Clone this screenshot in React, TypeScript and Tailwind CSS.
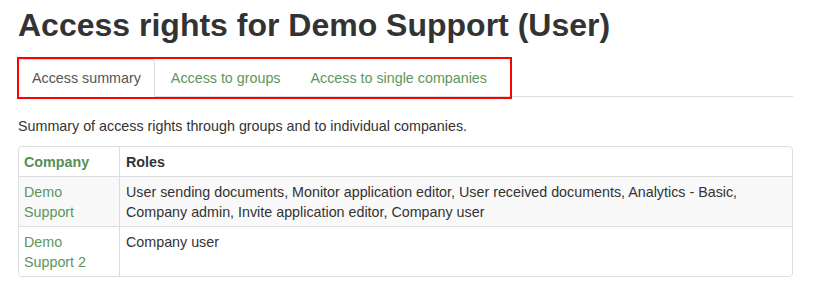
import React from 'react'

const tabs = ['Access summary', 'Access to groups', 'Access to single companies']

const rows = [
  {
    company: 'Demo Support',
    roles:
      'User sending documents, Monitor application editor, User received documents, Analytics - Basic, Company admin, Invite application editor, Company user',
    striped: true,
  },
  { company: 'Demo Support 2', roles: 'Company user', striped: false },
]

export default function App() {
  return (
    <div className="min-h-[295px] bg-white font-['Liberation_Sans',Arial,sans-serif] text-[14.3px] leading-5 text-[#333]">
      <div className="ml-[18px] w-[775px]">
        <h1 className="pt-[8px] text-[32px] leading-[35.2px] font-bold text-[#333]">
          Access rights for Demo Support (User)
        </h1>

        <div className="relative mt-[16px]">
          <ul className="flex border-b border-[#ddd]">
            {tabs.map((t, i) => (
              <li key={t} className="-mb-px mr-[2px]">
                {i === 0 ? (
                  <span className="block rounded-t-[4px] border border-[#ddd] border-b-transparent bg-white px-[13px] py-2 text-[#555]">
                    {t}
                  </span>
                ) : (
                  <a className="block border border-transparent px-[13px] py-2 text-[#5c965c]">{t}</a>
                )}
              </li>
            ))}
          </ul>
          <div className="pointer-events-none absolute -top-[2px] -left-[1px] h-[42px] w-[495px] border-2 border-[#ff0000]" />
        </div>

        <p className="mt-[19px]">Summary of access rights through groups and to individual companies.</p>

        <div className="mt-[10px] overflow-hidden rounded-[4px] border border-[#ddd]">
          <div className="grid grid-cols-[101px_1fr]">
            <div className="border-r border-[#ddd] px-[5px] py-[4.5px] font-bold text-[#558f55]">Company</div>
            <div className="px-[6px] py-[4.5px] font-bold text-[#333]">Roles</div>
          </div>
          {rows.map((r) => (
            <div
              key={r.company}
              className={`grid grid-cols-[101px_1fr] border-t border-[#ddd] ${r.striped ? 'bg-[#f9f9f9]' : 'bg-white'}`}
            >
              <div className="border-r border-[#ddd] px-[5px] py-[4.5px]">
                <a className="block max-w-[80px] text-[#5c965c]">{r.company}</a>
              </div>
              <div className="px-[6px] py-[4.5px]">{r.roles}</div>
            </div>
          ))}
        </div>
      </div>
    </div>
  )
}
